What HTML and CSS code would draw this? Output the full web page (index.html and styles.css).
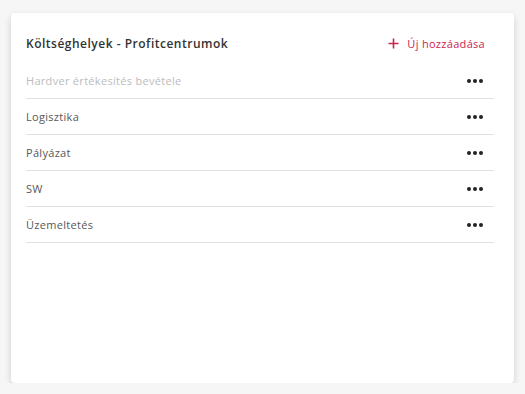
FILE: index.html
```html
<!DOCTYPE html>
<html lang="hu">
<head>
    <meta charset="UTF-8">
    <title>Költséghelyek - Profitcentrumok</title>
    <link rel="stylesheet" href="styles.css">
</head>
<body>

<div class="card">
    <div class="card-header">
        <span class="card-title">Költséghelyek - Profitcentrumok</span>
        <a class="add-link" href="#">
            <svg width="11" height="11" viewBox="0 0 11 11"><path d="M5.5 0.5v10M0.5 5.5h10" stroke="currentColor" stroke-width="1.6" fill="none"/></svg>
            Új hozzáadása
        </a>
    </div>

    <div class="list">
        <div class="row muted">
            <span>Hardver értékesítés bevétele</span>
            <button class="dots"><i></i><i></i><i></i></button>
        </div>
        <div class="row">
            <span>Logisztika</span>
            <button class="dots"><i></i><i></i><i></i></button>
        </div>
        <div class="row">
            <span>Pályázat</span>
            <button class="dots"><i></i><i></i><i></i></button>
        </div>
        <div class="row">
            <span>SW</span>
            <button class="dots"><i></i><i></i><i></i></button>
        </div>
        <div class="row">
            <span>Üzemeltetés</span>
            <button class="dots"><i></i><i></i><i></i></button>
        </div>
    </div>
</div>

</body>
</html>
```

FILE: styles.css
```css
body, html {
    font-family: 'Open Sans', sans-serif;
    margin: 0;
    padding: 0;
    background: #f6f6f6;
}

body {
    padding: 13px 11px 0 11px;
}

.card {
    background: #fff;
    border-radius: 4px;
    height: 370px;
    padding: 20px 20px 0 15px;
    box-sizing: border-box;
    box-shadow: 0 3px 7px rgba(0, 0, 0, 0.16);
}

.card-header {
    display: flex;
    justify-content: space-between;
    align-items: center;
    height: 20px;
    margin-bottom: 10px;
}

.card-title {
    font-size: 12px;
    font-weight: 600;
    letter-spacing: 0.5px;
    color: #333;
}

.add-link {
    display: flex;
    align-items: center;
    gap: 8px;
    font-size: 11px;
    letter-spacing: 0.3px;
    color: #c9264f;
    text-decoration: none;
    margin-right: 9px;
}

.row {
    display: flex;
    justify-content: space-between;
    align-items: center;
    height: 35px;
    border-bottom: 1px solid #e2e2e2;
    font-size: 11px;
    letter-spacing: 0.3px;
    color: #585858;
}

.row.muted {
    color: #bcbcbc;
}

.dots {
    display: flex;
    gap: 2px;
    background: none;
    border: none;
    padding: 0;
    margin-right: 11px;
    cursor: pointer;
}

.dots i {
    width: 4px;
    height: 4px;
    border-radius: 50%;
    background: #222;
}
```
